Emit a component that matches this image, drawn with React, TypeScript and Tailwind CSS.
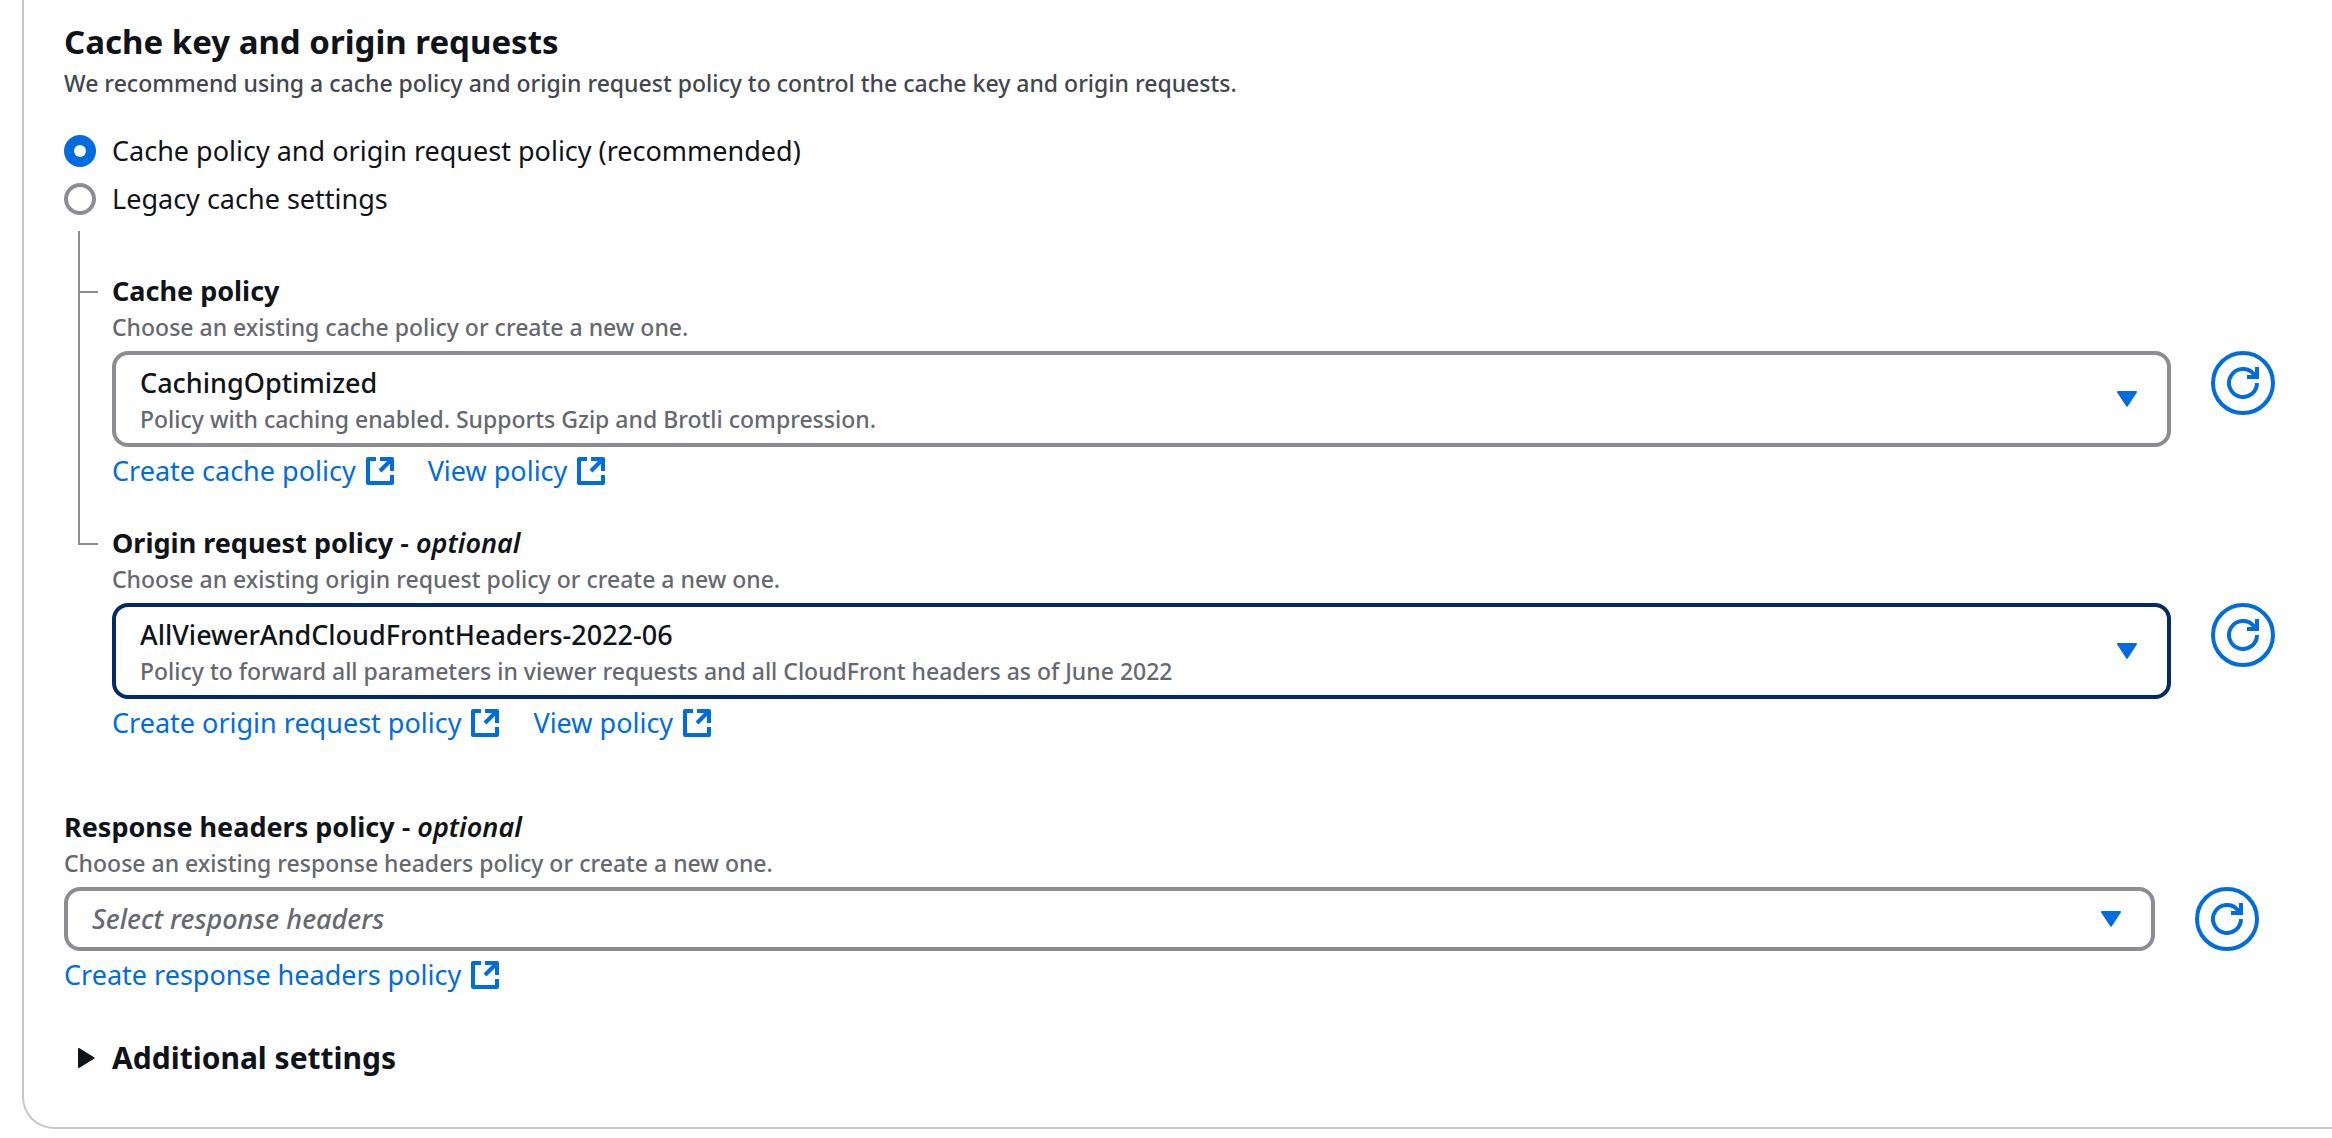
import { useState, type ReactNode } from "react";

function ExternalIcon() {
  return (
    <svg viewBox="0 0 32 32" className="h-8 w-8 shrink-0" fill="none" stroke="currentColor" strokeWidth="4" aria-hidden="true">
      <path d="M12 4H4v24h24v-8" strokeLinejoin="round" />
      <path d="M16 4h12v12" strokeLinejoin="round" />
      <path d="M28 4 16 16" />
    </svg>
  );
}

function RefreshIcon() {
  return (
    <svg viewBox="0 0 32 32" className="h-8 w-8" fill="none" stroke="currentColor" strokeWidth="4" aria-hidden="true">
      <path d="M30 16a14 14 0 1 1-3.5-9.3L29 10" />
      <path d="M30 0v10H20" />
    </svg>
  );
}

function CaretDown() {
  return (
    <svg viewBox="0 0 20 16" className="pointer-events-none absolute right-[34px] top-1/2 h-4 w-5 -translate-y-1/2 text-[#006ce0]" aria-hidden="true">
      <path d="M1 1h18L10 14.6z" fill="currentColor" stroke="currentColor" strokeWidth="2" strokeLinejoin="round" />
    </svg>
  );
}

function ExternalLink({ children }: { children: ReactNode }) {
  return (
    <a href="#" className="flex items-center gap-2 text-[27px] leading-10 text-[#006ce0]">
      {children}
      <ExternalIcon />
    </a>
  );
}

type PolicyFieldProps = {
  id: string;
  label: string;
  optional?: boolean;
  hint: string;
  value: string;
  description?: string;
  focused?: boolean;
  links: string[];
};

function PolicyField({ id, label, optional, hint, value, description, focused, links }: PolicyFieldProps) {
  return (
    <div className="min-w-0 flex-1">
      <label htmlFor={id} className="block text-[27px] font-bold leading-10">
        {label}
        {optional && <span className="font-semibold"> - <i>optional</i></span>}
      </label>
      <p id={`${id}-hint`} className="text-[23px] font-medium leading-8 text-[#656871]">{hint}</p>

      <div className="mt-2 flex items-start gap-10">
        <div className="relative min-w-0 flex-1">
          <select
            id={id}
            aria-describedby={`${id}-hint`}
            className={`block w-full appearance-none rounded-2xl border-4 bg-white pl-6 pr-20 text-[27px] font-medium leading-10 outline-none ${
              description ? "h-24 pb-10 pt-2" : "h-16 py-2 italic text-[#656871]"
            } ${focused ? "border-[#002b66]" : "border-[#8c8c94]"}`}
          >
            <option>{value}</option>
          </select>
          {description && (
            <span className="pointer-events-none absolute bottom-3 left-7 text-[23px] font-medium leading-8 text-[#656871]">{description}</span>
          )}
          <CaretDown />
        </div>
        <button
          type="button"
          aria-label={`Refresh ${label}`}
          className="flex h-16 w-16 shrink-0 items-center justify-center rounded-full border-4 border-[#006ce0] text-[#006ce0]"
        >
          <RefreshIcon />
        </button>
      </div>

      <div className="mt-1 flex gap-8">
        {links.map((text) => (
          <ExternalLink key={text}>{text}</ExternalLink>
        ))}
      </div>
    </div>
  );
}

const modes = [
  { id: "policy", label: "Cache policy and origin request policy (recommended)" },
  { id: "legacy", label: "Legacy cache settings" },
];

export default function App() {
  const [mode, setMode] = useState("policy");

  return (
    <main className="bg-white pb-[9px] pl-[22px] font-['Noto_Sans','Open_Sans',sans-serif] text-[#0f141a]">
      <section className="rounded-bl-[32px] border-b-2 border-l-2 border-[#c6c6cd] pb-[49px] pl-10 pr-[73px] pt-5">
        <h2 className="text-[33px] font-bold leading-[44px]">Cache key and origin requests</h2>
        <p className="mt-[3px] text-[23px] font-medium leading-8 text-[#424650]">
          We recommend using a cache policy and origin request policy to control the cache key and origin requests.
        </p>

        {/* Mode */}
        <div className="mt-8 flex flex-col gap-2">
          {modes.map((m) => (
            <label key={m.id} className="flex items-center gap-4 text-[27px] leading-10">
              <input
                type="radio"
                name="mode"
                value={m.id}
                checked={mode === m.id}
                onChange={() => setMode(m.id)}
                className="h-8 w-8 shrink-0 appearance-none rounded-full border-4 border-[#8c8c94] bg-white checked:border-10 checked:border-[#006ce0]"
              />
              {m.label}
            </label>
          ))}
        </div>

        {/* Policies hang off the selected mode as a tree */}
        <div className="-mr-4 mt-3">
          <div className="flex">
            <div className="ml-3.5 mr-3.5 w-5 shrink-0 border-l-2 border-[#8c8c94] pt-[60px]">
              <div className="h-0.5 bg-[#8c8c94]" />
            </div>
            <div className="flex min-w-0 flex-1 pb-8 pt-10">
              <PolicyField
                id="cache-policy"
                label="Cache policy"
                hint="Choose an existing cache policy or create a new one."
                value="CachingOptimized"
                description="Policy with caching enabled. Supports Gzip and Brotli compression."
                links={["Create cache policy", "View policy"]}
              />
            </div>
          </div>
          <div className="flex">
            <div className="ml-3.5 mr-3.5 h-[22px] w-5 shrink-0 border-b-2 border-l-2 border-[#8c8c94]" />
            <PolicyField
              id="origin-request-policy"
              label="Origin request policy"
              optional
              hint="Choose an existing origin request policy or create a new one."
              value="AllViewerAndCloudFrontHeaders-2022-06"
              description="Policy to forward all parameters in viewer requests and all CloudFront headers as of June 2022"
              focused
              links={["Create origin request policy", "View policy"]}
            />
          </div>
        </div>

        <div className="mt-16 flex">
          <PolicyField
            id="response-headers-policy"
            label="Response headers policy"
            optional
            hint="Choose an existing response headers policy or create a new one."
            value="Select response headers"
            links={["Create response headers policy"]}
          />
        </div>

        <button type="button" aria-expanded="false" className="mt-[43px] flex items-center gap-4 pl-3.5 text-[30px] font-bold leading-10">
          <svg viewBox="0 0 18 20" className="h-5 w-[18px]" aria-hidden="true">
            <path d="M1 1v18L15.5 10z" fill="currentColor" stroke="currentColor" strokeWidth="2" strokeLinejoin="round" />
          </svg>
          Additional settings
        </button>
      </section>
    </main>
  );
}
